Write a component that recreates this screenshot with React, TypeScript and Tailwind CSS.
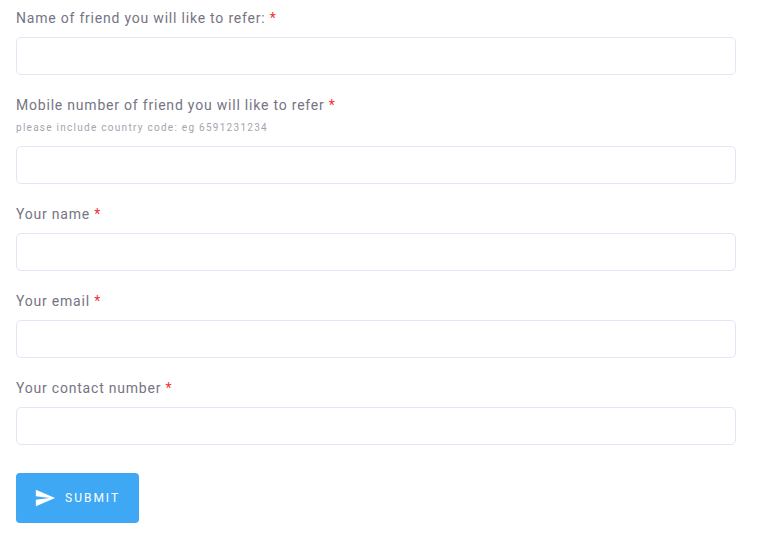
const fieldClass = "block w-full h-[38px] rounded-[5px] border border-[#e6e3f6] bg-white";

function Field({ label, hint, gap }: { label: string; hint?: string; gap: string }) {
  return (
    <div className={gap}>
      <label className="block text-[14px] leading-[20px] tracking-[0.79px] text-[#767483]">
        {label} <span className="text-[#f23030]">*</span>
      </label>
      {hint && (
        <p className="mt-[5px] text-[10px] leading-[16px] tracking-[1.27px] text-[#a5a3af]">{hint}</p>
      )}
      <input type="text" className={`${fieldClass} ${hint ? "mt-[10px]" : "mt-[9px]"}`} />
    </div>
  );
}

export default function App() {
  return (
    <div className="w-[770px] h-[551px] bg-white overflow-hidden font-['Roboto',sans-serif]">
      <form className="pl-[16px] pr-[34px] pt-[8px]">
        <Field gap="" label="Name of friend you will like to refer:" />
        <Field
          gap="mt-[20px]"
          label="Mobile number of friend you will like to refer"
          hint="please include country code: eg 6591231234"
        />
        <Field gap="mt-[20px]" label="Your name" />
        <Field gap="mt-[20px]" label="Your email" />
        <Field gap="mt-[20px]" label="Your contact number" />
        <button
          type="button"
          className="mt-[28px] flex items-center w-[123px] h-[50px] rounded-[4px] bg-[#3ea8f5] pl-[18px] text-white"
        >
          <svg viewBox="0 0 24 24" className="w-[22px] h-[22px] fill-white">
            <path d="M2.01 21 23 12 2.01 3 2 10l15 2-15 2z" />
          </svg>
          <span className="ml-[9px] text-[12px] tracking-[2px]">SUBMIT</span>
        </button>
      </form>
    </div>
  );
}
